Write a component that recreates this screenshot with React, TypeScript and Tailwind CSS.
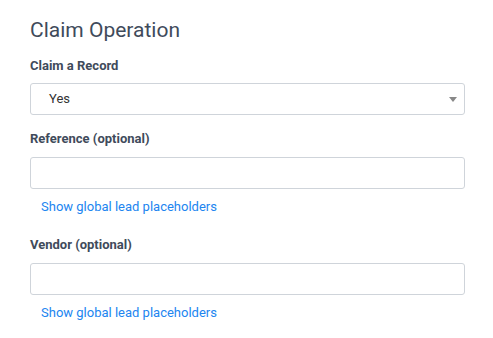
export default function App() {
  return (
    <div className="min-h-screen bg-white px-[30px] pt-[16px] font-['Roboto',sans-serif]">
      <h2 className="text-[21px] leading-[28px] text-[#3f4b5b]">Claim Operation</h2>

      <label className="mt-[13px] block text-[13px] font-bold leading-[18px] text-[#3f4b5b]">
        Claim a Record
      </label>
      <div className="relative mt-[8px] w-[435px]">
        <div className="flex h-[32px] items-center rounded-[3px] border border-[#cfd4da] pl-[18px] text-[13px] text-[#333]">
          Yes
        </div>
        <span className="absolute right-[8px] top-[14px] h-0 w-0 border-x-[4px] border-t-[5px] border-x-transparent border-t-[#888]" />
      </div>

      <label className="mt-[15px] block text-[13px] font-bold leading-[18px] text-[#3f4b5b]">
        Reference (optional)
      </label>
      <input className="mt-[9px] block h-[32px] w-[435px] rounded-[3px] border border-[#cfd4da] px-3 text-[13px] outline-none" />
      <a className="mt-[9px] ml-[11px] block text-[13px] leading-[18px] text-[#2185f0]">
        Show global lead placeholders
      </a>

      <label className="mt-[20px] block text-[13px] font-bold leading-[18px] text-[#3f4b5b]">
        Vendor (optional)
      </label>
      <input className="mt-[9px] block h-[32px] w-[435px] rounded-[3px] border border-[#cfd4da] px-3 text-[13px] outline-none" />
      <a className="mt-[9px] ml-[11px] block text-[13px] leading-[18px] text-[#2185f0]">
        Show global lead placeholders
      </a>
    </div>
  );
}
